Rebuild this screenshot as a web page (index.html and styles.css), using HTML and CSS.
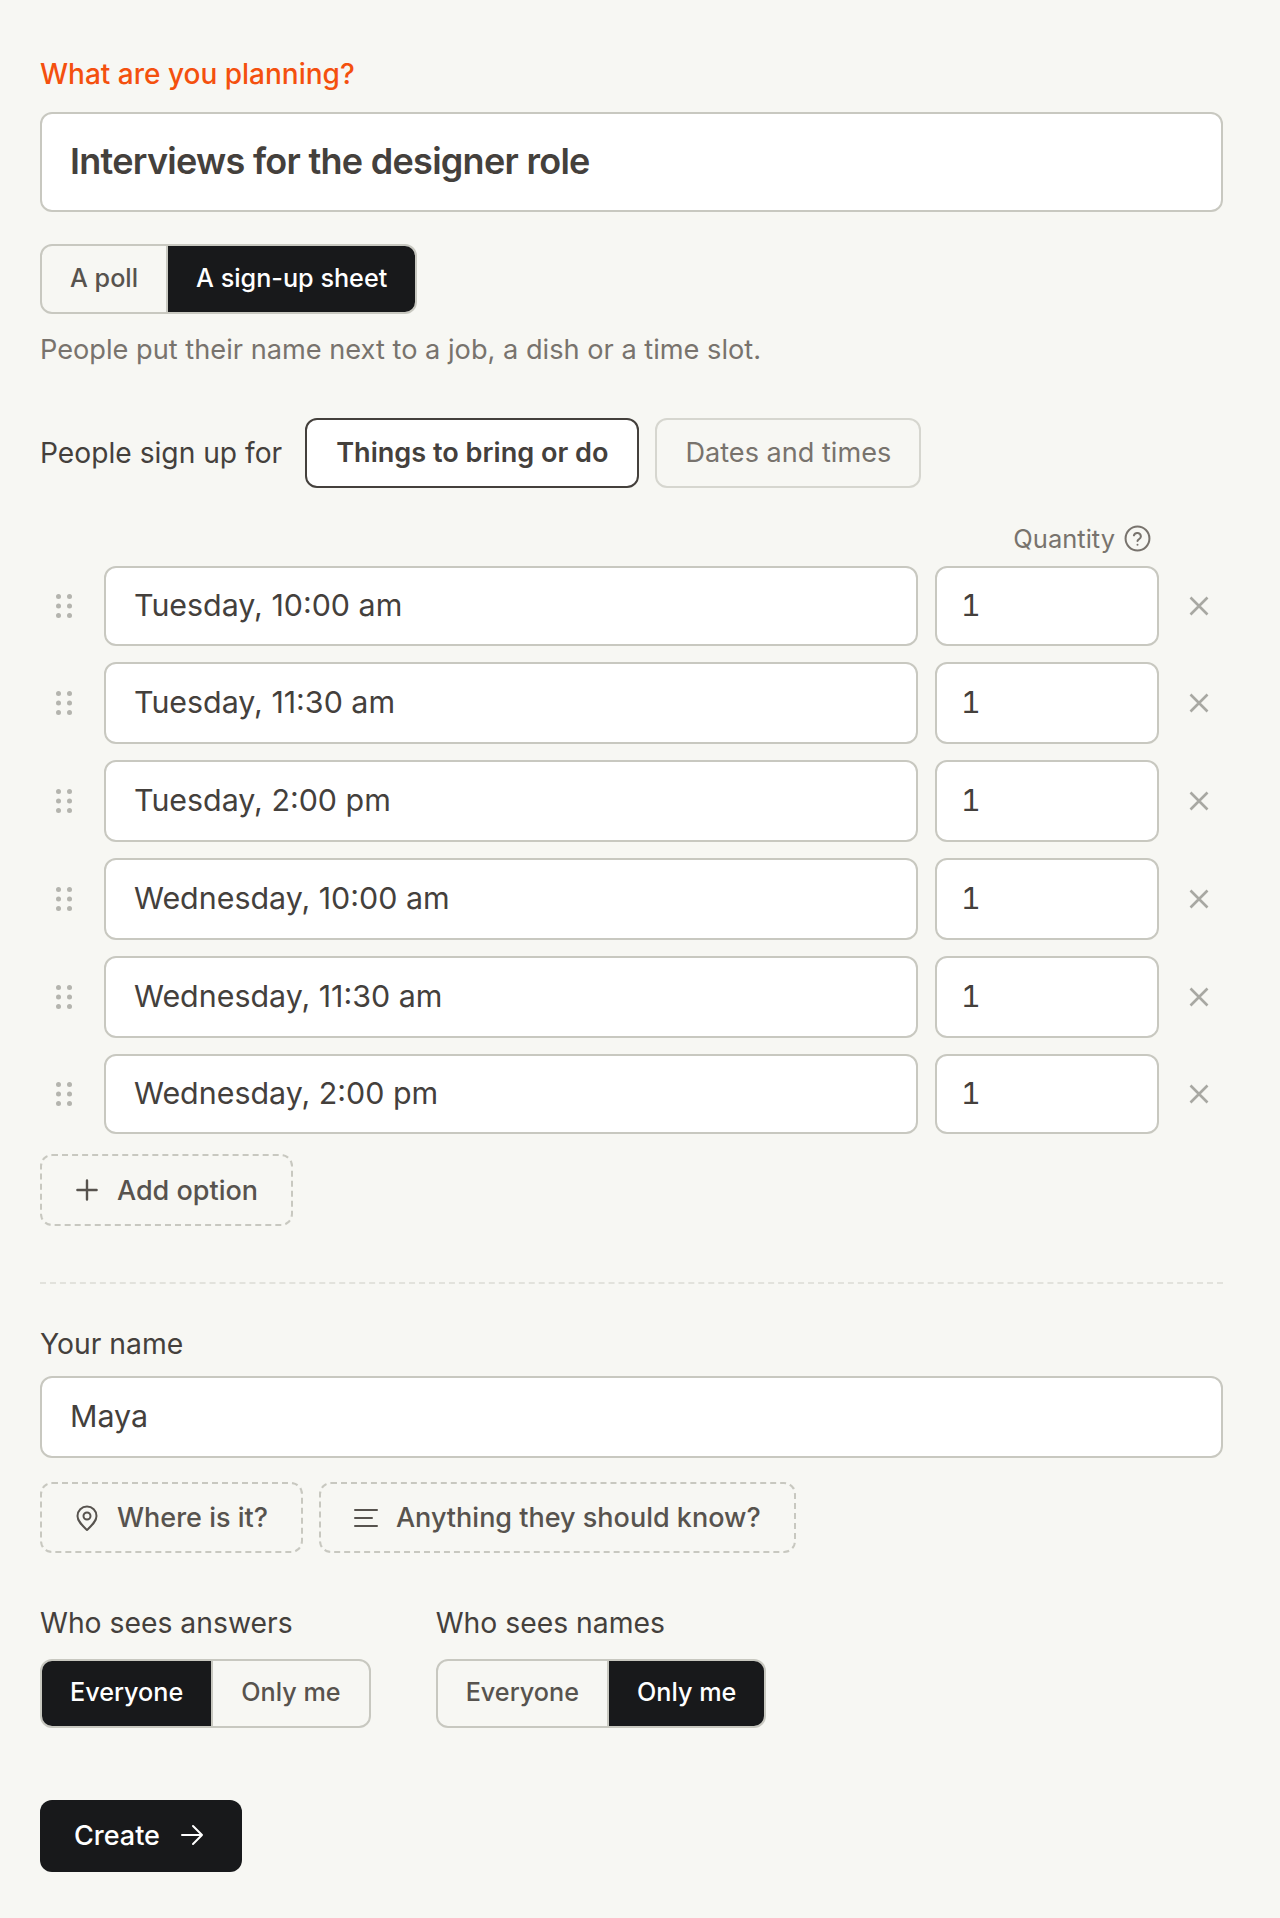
FILE: index.html
```html
<!DOCTYPE html>
<html lang="en">
<head>
    <meta charset="UTF-8">
    <title>New sign-up sheet</title>
    <link rel="stylesheet" href="styles.css">
</head>
<body>
<form class="page">
    <p class="label-accent">What are you planning?</p>
    <div class="field field-title">Interviews for the designer role</div>

    <div class="seg seg-kind">
        <span class="seg-item">A poll</span>
        <span class="seg-item on">A sign-up sheet</span>
    </div>
    <p class="hint">People put their name next to a job, a dish or a time slot.</p>

    <div class="type-row">
        <span class="type-label">People sign up for</span>
        <span class="chip chip-on">Things to bring or do</span>
        <span class="chip">Dates and times</span>
    </div>

    <div class="qty-head">
        <span>Quantity</span>
        <svg class="help" viewBox="0 0 24 24" fill="none" stroke="currentColor" stroke-width="1.8" stroke-linecap="round" stroke-linejoin="round">
            <circle cx="12" cy="12" r="10.6"/>
            <path d="M8.800 9.200a3.200 3.200 0 0 1 6.200 1c0 2.100-3 2.700-3 4.100"/>
            <path d="M12 17.600h.01"/>
        </svg>
    </div>

    <ul class="options">
        <li class="option">
            <svg class="grip" viewBox="0 0 16 24"><circle cx="2.500" cy="2.500" r="2.500"/><circle cx="13.500" cy="2.500" r="2.500"/><circle cx="2.500" cy="12" r="2.500"/><circle cx="13.500" cy="12" r="2.500"/><circle cx="2.500" cy="21.500" r="2.500"/><circle cx="13.500" cy="21.500" r="2.500"/></svg>
            <div class="field field-name">Tuesday, 10:00 am</div>
            <div class="field field-qty">1</div>
            <svg class="remove" viewBox="0 0 20 20"><path d="M1.500 1.500l17 17M18.500 1.500l-17 17"/></svg>
        </li>
        <li class="option">
            <svg class="grip" viewBox="0 0 16 24"><circle cx="2.500" cy="2.500" r="2.500"/><circle cx="13.500" cy="2.500" r="2.500"/><circle cx="2.500" cy="12" r="2.500"/><circle cx="13.500" cy="12" r="2.500"/><circle cx="2.500" cy="21.500" r="2.500"/><circle cx="13.500" cy="21.500" r="2.500"/></svg>
            <div class="field field-name">Tuesday, 11:30 am</div>
            <div class="field field-qty">1</div>
            <svg class="remove" viewBox="0 0 20 20"><path d="M1.500 1.500l17 17M18.500 1.500l-17 17"/></svg>
        </li>
        <li class="option">
            <svg class="grip" viewBox="0 0 16 24"><circle cx="2.500" cy="2.500" r="2.500"/><circle cx="13.500" cy="2.500" r="2.500"/><circle cx="2.500" cy="12" r="2.500"/><circle cx="13.500" cy="12" r="2.500"/><circle cx="2.500" cy="21.500" r="2.500"/><circle cx="13.500" cy="21.500" r="2.500"/></svg>
            <div class="field field-name">Tuesday, 2:00 pm</div>
            <div class="field field-qty">1</div>
            <svg class="remove" viewBox="0 0 20 20"><path d="M1.500 1.500l17 17M18.500 1.500l-17 17"/></svg>
        </li>
        <li class="option">
            <svg class="grip" viewBox="0 0 16 24"><circle cx="2.500" cy="2.500" r="2.500"/><circle cx="13.500" cy="2.500" r="2.500"/><circle cx="2.500" cy="12" r="2.500"/><circle cx="13.500" cy="12" r="2.500"/><circle cx="2.500" cy="21.500" r="2.500"/><circle cx="13.500" cy="21.500" r="2.500"/></svg>
            <div class="field field-name">Wednesday, 10:00 am</div>
            <div class="field field-qty">1</div>
            <svg class="remove" viewBox="0 0 20 20"><path d="M1.500 1.500l17 17M18.500 1.500l-17 17"/></svg>
        </li>
        <li class="option">
            <svg class="grip" viewBox="0 0 16 24"><circle cx="2.500" cy="2.500" r="2.500"/><circle cx="13.500" cy="2.500" r="2.500"/><circle cx="2.500" cy="12" r="2.500"/><circle cx="13.500" cy="12" r="2.500"/><circle cx="2.500" cy="21.500" r="2.500"/><circle cx="13.500" cy="21.500" r="2.500"/></svg>
            <div class="field field-name">Wednesday, 11:30 am</div>
            <div class="field field-qty">1</div>
            <svg class="remove" viewBox="0 0 20 20"><path d="M1.500 1.500l17 17M18.500 1.500l-17 17"/></svg>
        </li>
        <li class="option">
            <svg class="grip" viewBox="0 0 16 24"><circle cx="2.500" cy="2.500" r="2.500"/><circle cx="13.500" cy="2.500" r="2.500"/><circle cx="2.500" cy="12" r="2.500"/><circle cx="13.500" cy="12" r="2.500"/><circle cx="2.500" cy="21.500" r="2.500"/><circle cx="13.500" cy="21.500" r="2.500"/></svg>
            <div class="field field-name">Wednesday, 2:00 pm</div>
            <div class="field field-qty">1</div>
            <svg class="remove" viewBox="0 0 20 20"><path d="M1.500 1.500l17 17M18.500 1.500l-17 17"/></svg>
        </li>
    </ul>

    <span class="ghost ghost-add">
        <svg class="ico" viewBox="0 0 20 20"><path d="M10 2v16M2 10h16"/></svg>
        Add option
    </span>

    <hr class="rule">

    <p class="label">Your name</p>
    <div class="field field-your">Maya</div>

    <div class="extras">
        <span class="ghost">
            <svg class="ico" viewBox="0 0 24 24"><path d="M12 24c5-4.800 9.500-8.900 9.500-14a9.500 9.500 0 0 0-19 0c0 5.100 4.500 9.200 9.500 14z"/><circle cx="12" cy="10" r="3.500"/></svg>
            Where is it?
        </span>
        <span class="ghost">
            <svg class="ico" viewBox="0 0 24 24"><path d="M1 4h22M1 12h17M1 20h22"/></svg>
            Anything they should know?
        </span>
    </div>

    <div class="privacy">
        <div class="privacy-col">
            <p class="label">Who sees answers</p>
            <div class="seg seg-small">
                <span class="seg-item on">Everyone</span>
                <span class="seg-item">Only me</span>
            </div>
        </div>
        <div class="privacy-col">
            <p class="label">Who sees names</p>
            <div class="seg seg-small">
                <span class="seg-item">Everyone</span>
                <span class="seg-item on">Only me</span>
            </div>
        </div>
    </div>

    <span class="create">
        Create
        <svg class="ico" viewBox="0 0 24 24"><path d="M2 12h20M13 3l9 9-9 9"/></svg>
    </span>
</form>
</body>
</html>
```

FILE: styles.css
```css
* {
    margin: 0;
    padding: 0;
    box-sizing: border-box;
    list-style: none;
}

body {
    background: #f7f7f3;
    color: #44403c;
    font-family: Inter, "Liberation Sans", sans-serif;
    font-size: 30.4px;
}

.page {
    display: flex;
    flex-direction: column;
    align-items: flex-start;
    height: 1918px;
    padding: 58px 57px 0 40px;
}

.label-accent {
    color: #f4500e;
    font-size: 28px;
    font-weight: 500;
    line-height: 32px;
    margin-bottom: 22px;
}

.label {
    font-size: 28.300px;
    line-height: 32px;
}

.field {
    display: flex;
    align-items: center;
    background: #fff;
    border: 2px solid #c8c8c0;
    border-radius: 12px;
    padding: 0 28px 2px;
    line-height: 36px;
}

.field-title {
    width: 100%;
    height: 100px;
    font-size: 36px;
    font-weight: 600;
    letter-spacing: -0.02em;
}

.seg {
    display: flex;
    border: 2px solid #c8c8c0;
    border-radius: 12px;
    overflow: hidden;
    font-size: 25.200px;
    font-weight: 500;
    color: #57534e;
}

.seg-item {
    display: flex;
    align-items: center;
    padding: 0 28px 3px;
    line-height: 32px;
}

.seg-item + .seg-item {
    border-left: 2px solid #c8c8c0;
}

.seg-item.on {
    background: #18191b;
    color: #fff;
}

.seg-kind {
    height: 70px;
    margin-top: 32px;
}

.seg-small {
    height: 69px;
}

.hint {
    color: #78736d;
    font-size: 27.200px;
    line-height: 36px;
    margin-top: 18px;
}

.type-row {
    display: flex;
    align-items: center;
    gap: 16px;
    margin-top: 50px;
    font-size: 27.100px;
}

.type-label {
    font-size: 28.200px;
    margin-right: 7px;
}

.chip {
    display: flex;
    align-items: center;
    height: 70px;
    padding: 0 28px 2px;
    border: 2px solid #d6d6cf;
    border-radius: 12px;
    color: #78736d;
}

.chip-on {
    background: #fff;
    border-color: #44403c;
    color: #44403c;
    font-weight: 600;
    padding: 0 29px 2px;
}

.qty-head {
    display: flex;
    align-items: center;
    justify-content: flex-end;
    gap: 9px;
    width: 100%;
    height: 32px;
    margin-top: 34px;
    padding-right: 72px;
    color: #78736d;
    font-size: 25.500px;
}

.help {
    width: 27px;
    height: 27px;
}

.options {
    display: flex;
    flex-direction: column;
    gap: 16px;
    width: 100%;
    margin-top: 12px;
}

.option {
    display: flex;
    align-items: center;
}

.grip {
    width: 16px;
    height: 24px;
    margin: 0 32px 0 16px;
    fill: #b4b4ae;
}

.field-name {
    flex: 1;
    height: 82px;
}

.field-qty {
    width: 224px;
    height: 82px;
    margin-left: 17px;
    padding-left: 24px;
    font-variant-numeric: tabular-nums;
}

.option:first-child .field,
.option:last-child .field {
    height: 80px;
}

.remove {
    width: 20px;
    height: 20px;
    margin: 0 14px 0 30px;
    fill: none;
    stroke: #a8a8a2;
    stroke-width: 2.600;
}

.ico {
    width: 24px;
    height: 24px;
    fill: none;
    stroke: currentColor;
    stroke-width: 2;
    stroke-linecap: round;
    stroke-linejoin: round;
    flex: none;
    overflow: visible;
}

.ghost {
    display: inline-flex;
    align-items: center;
    gap: 18px;
    height: 71px;
    padding: 0 33px;
    border: 2px dashed #c8c8c0;
    border-radius: 12px;
    color: #57534e;
    font-size: 27px;
    font-weight: 500;
}

.ghost-add {
    margin-top: 20px;
    height: 72px;
}

.rule {
    width: 100%;
    border: 0;
    border-top: 2px dashed #e2e2dc;
    margin: 56px 0 44px;
}

.field-your {
    width: 100%;
    height: 82px;
    margin-top: 16px;
}

.extras {
    display: flex;
    gap: 16px;
    margin-top: 24px;
}

.privacy {
    display: flex;
    gap: 65px;
    margin-top: 54px;
}

.privacy-col {
    display: flex;
    flex-direction: column;
    gap: 20px;
}

.create {
    display: inline-flex;
    align-items: center;
    gap: 20px;
    height: 72px;
    margin-top: 72px;
    padding: 0 38px 2px 34px;
    background: #18191b;
    border-radius: 12px;
    color: #fff;
    font-size: 27px;
    font-weight: 500;
}
```
